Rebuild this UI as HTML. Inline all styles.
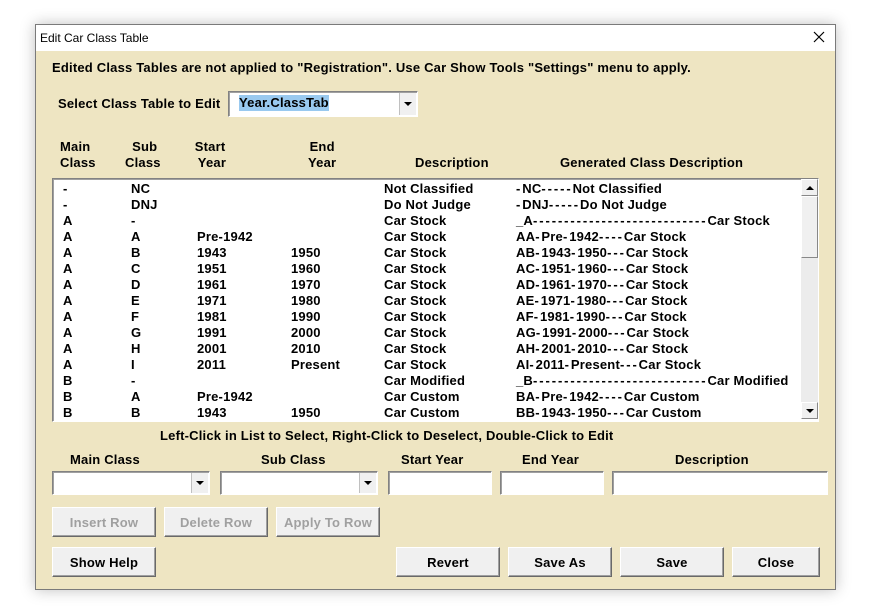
<!DOCTYPE html>
<html><head><meta charset="utf-8"><style>
body{margin:0;width:878px;height:612px;background:#fff;position:relative;overflow:hidden;font-family:Tahoma,"Liberation Sans","DejaVu Sans",sans-serif;}
.win{position:absolute;left:35px;top:24px;width:799px;height:564px;border:1px solid #7a7a7a;background:#EEE5C2;box-shadow:0 0 14px rgba(0,0,0,.25);}
.title{position:absolute;left:0;top:0;right:0;height:26px;background:#fff;font-size:12px;color:#000;}
.t{position:absolute;white-space:nowrap;font-weight:bold;font-size:13px;color:#000;line-height:16px;letter-spacing:0.2px;}
.box{position:absolute;background:#fff;border:1px solid #fff;border-top-color:#828282;border-left-color:#828282;box-shadow:inset 1px 1px 0 #a0a0a0;}
.btn{position:absolute;height:30px;background:#f0f0f0;border:1px solid #fff;border-right-color:#696969;border-bottom-color:#696969;box-shadow:inset -1px -1px 0 #a0a0a0;font-weight:bold;font-size:13px;text-align:center;line-height:30px;box-sizing:border-box;letter-spacing:0.2px;}
.dis{color:#a0a0a0;}
.dd{position:absolute;width:16px;background:#f0f0f0;border-left:1px solid #c0c0c0;}
.dd:after{content:"";position:absolute;left:4px;top:50%;margin-top:-2px;border-left:4px solid transparent;border-right:4px solid transparent;border-top:4px solid #000;}
.row{position:absolute;left:0;height:16px;width:760px;}
.row span{position:absolute;white-space:nowrap;font-weight:bold;font-size:13px;line-height:16px;letter-spacing:0.2px;}
.row span i{font-style:normal;letter-spacing:1.9px;}
</style></head><body>
<div class="win">
<div class="title"><span style="position:absolute;left:4px;top:6px;">Edit Car Class Table</span>
<svg style="position:absolute;left:777px;top:6px" width="12" height="12"><path d="M1 1L11 11M11 1L1 11" stroke="#000" stroke-width="1.2"/></svg></div>

<div class="t" style="left:16px;top:35px;">Edited Class Tables are not applied to "Registration". Use Car Show Tools "Settings" menu to apply.</div>
<div class="t" style="left:22px;top:71px;">Select Class Table to Edit</div>
<div class="box" style="left:192px;top:66px;width:188px;height:24px;">
 <span style="position:absolute;left:10px;top:3px;background:#99c9ef;font-weight:bold;font-size:13px;line-height:16px;letter-spacing:0.2px;">Year.ClassTab</span>
 <div class="dd" style="right:1px;top:1px;height:22px;"></div>
</div>

<div class="t" style="left:24px;top:114px;">Main<br>Class</div>
<div class="t" style="left:89px;top:114px;text-align:center;">&nbsp;Sub<br>Class</div>
<div class="t" style="left:158px;top:114px;text-align:center;">Start<br>&nbsp;Year</div>
<div class="t" style="left:272px;top:114px;text-align:center;">End<br>Year</div>
<div class="t" style="left:379px;top:130px;">Description</div>
<div class="t" style="left:524px;top:130px;">Generated Class Description</div>

<div class="box" style="left:16px;top:153px;width:765px;height:242px;overflow:hidden;">
 <div style="position:absolute;left:0;top:2px;">
  <div class="row" style="top:0"><span style="left:10px">-</span><span style="left:78px">NC</span><span style="left:331px">Not Classified</span><span style="left:463px"><i>-</i>NC<i>-----</i>Not Classified</span></div>
  <div class="row" style="top:16px"><span style="left:10px">-</span><span style="left:78px">DNJ</span><span style="left:331px">Do Not Judge</span><span style="left:463px"><i>-</i>DNJ<i>-----</i>Do Not Judge</span></div>
  <div class="row" style="top:32px"><span style="left:10px">A</span><span style="left:78px">-</span><span style="left:331px">Car Stock</span><span style="left:463px">_A<i>----------------------------</i>Car Stock</span></div>
  <div class="row" style="top:48px"><span style="left:10px">A</span><span style="left:78px">A</span><span style="left:144px">Pre-1942</span><span style="left:331px">Car Stock</span><span style="left:463px">AA<i>-</i>Pre<i>-</i>1942<i>----</i>Car Stock</span></div>
  <div class="row" style="top:64px"><span style="left:10px">A</span><span style="left:78px">B</span><span style="left:144px">1943</span><span style="left:238px">1950</span><span style="left:331px">Car Stock</span><span style="left:463px">AB<i>-</i>1943<i>-</i>1950<i>---</i>Car Stock</span></div>
  <div class="row" style="top:80px"><span style="left:10px">A</span><span style="left:78px">C</span><span style="left:144px">1951</span><span style="left:238px">1960</span><span style="left:331px">Car Stock</span><span style="left:463px">AC<i>-</i>1951<i>-</i>1960<i>---</i>Car Stock</span></div>
  <div class="row" style="top:96px"><span style="left:10px">A</span><span style="left:78px">D</span><span style="left:144px">1961</span><span style="left:238px">1970</span><span style="left:331px">Car Stock</span><span style="left:463px">AD<i>-</i>1961<i>-</i>1970<i>---</i>Car Stock</span></div>
  <div class="row" style="top:112px"><span style="left:10px">A</span><span style="left:78px">E</span><span style="left:144px">1971</span><span style="left:238px">1980</span><span style="left:331px">Car Stock</span><span style="left:463px">AE<i>-</i>1971<i>-</i>1980<i>---</i>Car Stock</span></div>
  <div class="row" style="top:128px"><span style="left:10px">A</span><span style="left:78px">F</span><span style="left:144px">1981</span><span style="left:238px">1990</span><span style="left:331px">Car Stock</span><span style="left:463px">AF<i>-</i>1981<i>-</i>1990<i>---</i>Car Stock</span></div>
  <div class="row" style="top:144px"><span style="left:10px">A</span><span style="left:78px">G</span><span style="left:144px">1991</span><span style="left:238px">2000</span><span style="left:331px">Car Stock</span><span style="left:463px">AG<i>-</i>1991<i>-</i>2000<i>---</i>Car Stock</span></div>
  <div class="row" style="top:160px"><span style="left:10px">A</span><span style="left:78px">H</span><span style="left:144px">2001</span><span style="left:238px">2010</span><span style="left:331px">Car Stock</span><span style="left:463px">AH<i>-</i>2001<i>-</i>2010<i>---</i>Car Stock</span></div>
  <div class="row" style="top:176px"><span style="left:10px">A</span><span style="left:78px">I</span><span style="left:144px">2011</span><span style="left:238px">Present</span><span style="left:331px">Car Stock</span><span style="left:463px">AI<i>-</i>2011<i>-</i>Present<i>---</i>Car Stock</span></div>
  <div class="row" style="top:192px"><span style="left:10px">B</span><span style="left:78px">-</span><span style="left:331px">Car Modified</span><span style="left:463px">_B<i>----------------------------</i>Car Modified</span></div>
  <div class="row" style="top:208px"><span style="left:10px">B</span><span style="left:78px">A</span><span style="left:144px">Pre-1942</span><span style="left:331px">Car Custom</span><span style="left:463px">BA<i>-</i>Pre<i>-</i>1942<i>----</i>Car Custom</span></div>
  <div class="row" style="top:224px"><span style="left:10px">B</span><span style="left:78px">B</span><span style="left:144px">1943</span><span style="left:238px">1950</span><span style="left:331px">Car Custom</span><span style="left:463px">BB<i>-</i>1943<i>-</i>1950<i>---</i>Car Custom</span></div>
 </div>
 <div style="position:absolute;right:0;top:0;width:17px;height:240px;background:#ececec;">
  <div style="position:absolute;left:0;top:0;width:15px;height:15px;background:#f0f0f0;border:1px solid #fff;border-right-color:#888;border-bottom-color:#888;"><div style="position:absolute;left:4px;top:6px;border-left:4px solid transparent;border-right:4px solid transparent;border-bottom:4px solid #000;"></div></div>
  <div style="position:absolute;left:0;top:17px;width:15px;height:60px;background:#f0f0f0;border:1px solid #fff;border-right-color:#888;border-bottom-color:#888;"></div>
  <div style="position:absolute;left:0;bottom:0;width:15px;height:15px;background:#f0f0f0;border:1px solid #fff;border-right-color:#888;border-bottom-color:#888;"><div style="position:absolute;left:4px;top:6px;border-left:4px solid transparent;border-right:4px solid transparent;border-top:4px solid #000;"></div></div>
 </div>
</div>

<div class="t" style="left:124px;top:403px;">Left-Click in List to Select, Right-Click to Deselect, Double-Click to Edit</div>
<div class="t" style="left:34px;top:427px;">Main Class</div>
<div class="t" style="left:225px;top:427px;">Sub Class</div>
<div class="t" style="left:365px;top:427px;">Start Year</div>
<div class="t" style="left:486px;top:427px;">End Year</div>
<div class="t" style="left:639px;top:427px;">Description</div>

<div class="box" style="left:16px;top:446px;width:156px;height:22px;"><div class="dd" style="right:1px;top:1px;height:20px;"></div></div>
<div class="box" style="left:184px;top:446px;width:156px;height:22px;"><div class="dd" style="right:1px;top:1px;height:20px;"></div></div>
<div class="box" style="left:352px;top:446px;width:102px;height:22px;"></div>
<div class="box" style="left:464px;top:446px;width:102px;height:22px;"></div>
<div class="box" style="left:576px;top:446px;width:214px;height:22px;"></div>

<div class="btn dis" style="left:16px;top:482px;width:104px;">Insert Row</div>
<div class="btn dis" style="left:128px;top:482px;width:104px;">Delete Row</div>
<div class="btn dis" style="left:240px;top:482px;width:104px;">Apply To Row</div>

<div class="btn" style="left:16px;top:522px;width:104px;">Show Help</div>
<div class="btn" style="left:360px;top:522px;width:104px;">Revert</div>
<div class="btn" style="left:472px;top:522px;width:104px;">Save As</div>
<div class="btn" style="left:584px;top:522px;width:104px;">Save</div>
<div class="btn" style="left:696px;top:522px;width:88px;">Close</div>
</div>
</body></html>
